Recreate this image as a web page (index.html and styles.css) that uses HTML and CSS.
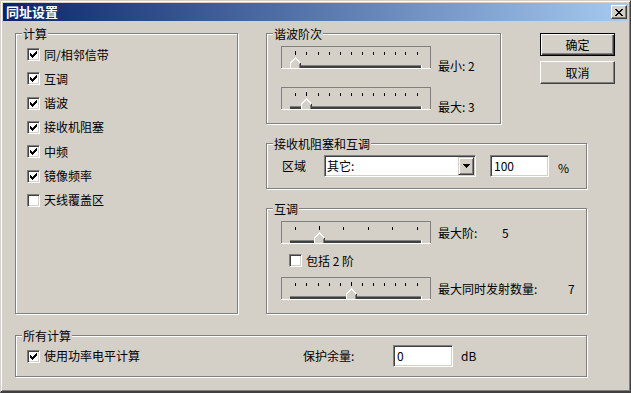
FILE: index.html
```html
<!DOCTYPE html>
<html lang="zh">
<head>
    <meta charset="UTF-8">
    <meta name="viewport" content="width=device-width, initial-scale=1.0">
    <title>同址设置</title>
    <link rel="stylesheet" href="styles.css">
</head>
<body>
    <svg class="defs" width="0" height="0">
        <symbol id="tick" viewBox="0 0 11 11">
            <path d="M2 4h1v3H2zM3 5h1v3H3zM4 6h1v3H4zM5 5h1v3H5zM6 4h1v3H6zM7 3h1v3H7zM8 2h1v3H8z" fill="#000"/>
        </symbol>
        <symbol id="frame" overflow="visible">
            <rect x="0.5" y="0.5" width="149" height="22" fill="none" stroke="#808080"/>
            <rect x="0" y="22" width="150" height="1" fill="#fff"/>
            <rect x="9" y="19" width="131" height="1" fill="#808080"/>
            <rect x="9" y="20" width="131" height="2" fill="#404040"/>
            <rect x="140" y="19" width="1" height="3" fill="#fff"/>
        </symbol>
        <symbol id="thumb" overflow="visible">
            <polygon points="0,22 0,17 5.5,11.5 11,17 11,22" fill="#D4D0C8"/>
            <polyline points="0.5,22 0.5,17 5.5,12 10,16.5" fill="none" stroke="#fff"/>
            <rect x="10" y="17" width="1" height="5" fill="#404040"/>
            <rect x="9" y="18" width="1" height="4" fill="#808080"/>
        </symbol>
    </svg>

    <div class="window">
        <div class="titlebar">
            <span class="title">同址设置</span>
            <span class="close">
                <svg width="8" height="7" viewBox="0 0 8 7" shape-rendering="crispEdges">
                    <path d="M0 0h2v1H0zM1 1h2v1H1zM2 2h4v1H2zM3 3h2v1H3zM2 4h4v1H2zM1 5h2v1H1zM0 6h2v1H0zM6 0h2v1H6zM5 1h2v1H5zM5 5h2v1H5zM6 6h2v1H6z" fill="#000"/>
                </svg>
            </span>
        </div>

        <div class="dialog">
            <div class="top">
                <div class="group calc">
                    <span class="legend">计算</span>
                    <ul class="checks">
                        <li class="check"><span class="box"><svg><use href="#tick"/></svg></span>同/相邻信带</li>
                        <li class="check"><span class="box"><svg><use href="#tick"/></svg></span>互调</li>
                        <li class="check"><span class="box"><svg><use href="#tick"/></svg></span>谐波</li>
                        <li class="check"><span class="box"><svg><use href="#tick"/></svg></span>接收机阻塞</li>
                        <li class="check"><span class="box"><svg><use href="#tick"/></svg></span>中频</li>
                        <li class="check"><span class="box"><svg><use href="#tick"/></svg></span>镜像频率</li>
                        <li class="check"><span class="box"></span>天线覆盖区</li>
                    </ul>
                </div>

                <div class="right">
                    <div class="row1">
                        <div class="group harm">
                            <span class="legend">谐波阶次</span>
                            <div class="srow">
                                <svg class="slider" width="150" height="23" shape-rendering="crispEdges">
                                    <use href="#frame"/>
                                    <g fill="#000">
                                        <rect x="14" y="5" width="1" height="4"/>
                                        <rect x="25" y="6" width="1" height="3"/>
                                        <rect x="37" y="6" width="1" height="3"/>
                                        <rect x="48" y="6" width="1" height="3"/>
                                        <rect x="59" y="6" width="1" height="3"/>
                                        <rect x="70" y="6" width="1" height="3"/>
                                        <rect x="81" y="6" width="1" height="3"/>
                                        <rect x="92" y="6" width="1" height="3"/>
                                        <rect x="103" y="6" width="1" height="3"/>
                                        <rect x="114" y="6" width="1" height="3"/>
                                        <rect x="124" y="6" width="1" height="3"/>
                                        <rect x="136" y="6" width="1" height="3"/>
                                    </g>
                                    <use href="#thumb" x="9"/>
                                </svg>
                                <span class="lbl">最小: 2</span>
                            </div>
                            <div class="srow">
                                <svg class="slider" width="150" height="23" shape-rendering="crispEdges">
                                    <use href="#frame"/>
                                    <g fill="#000">
                                        <rect x="14" y="6" width="1" height="3"/>
                                        <rect x="25" y="5" width="1" height="4"/>
                                        <rect x="37" y="6" width="1" height="3"/>
                                        <rect x="48" y="6" width="1" height="3"/>
                                        <rect x="59" y="6" width="1" height="3"/>
                                        <rect x="70" y="6" width="1" height="3"/>
                                        <rect x="81" y="6" width="1" height="3"/>
                                        <rect x="92" y="6" width="1" height="3"/>
                                        <rect x="103" y="6" width="1" height="3"/>
                                        <rect x="114" y="6" width="1" height="3"/>
                                        <rect x="124" y="6" width="1" height="3"/>
                                        <rect x="136" y="6" width="1" height="3"/>
                                    </g>
                                    <use href="#thumb" x="20"/>
                                </svg>
                                <span class="lbl">最大: 3</span>
                            </div>
                        </div>
                        <div class="buttons">
                            <button class="btn default">确定</button>
                            <button class="btn">取消</button>
                        </div>
                    </div>

                    <div class="group block">
                        <span class="legend">接收机阻塞和互调</span>
                        <div class="frow">
                            <span>区域</span>
                            <div class="field select">
                                <span class="val">其它:</span>
                                <span class="arrow">
                                    <svg width="7" height="4" viewBox="0 0 7 4" shape-rendering="crispEdges"><path d="M0 0h7v1H0zM1 1h5v1H1zM2 2h3v1H2zM3 3h1v1H3z" fill="#000"/></svg>
                                </span>
                            </div>
                            <div class="field input pct-input">100</div>
                            <span class="pct">%</span>
                        </div>
                    </div>

                    <div class="group imd">
                        <span class="legend">互调</span>
                        <div class="srow">
                            <svg class="slider" width="150" height="23" shape-rendering="crispEdges">
                                <use href="#frame"/>
                                <g fill="#000">
                                    <rect x="14" y="6" width="1" height="3"/>
                                    <rect x="38" y="5" width="1" height="4"/>
                                    <rect x="62" y="6" width="1" height="3"/>
                                    <rect x="87" y="6" width="1" height="3"/>
                                    <rect x="111" y="6" width="1" height="3"/>
                                    <rect x="136" y="6" width="1" height="3"/>
                                </g>
                                <use href="#thumb" x="33"/>
                            </svg>
                            <span class="lbl lbl-a">最大阶:</span>
                            <span>5</span>
                        </div>
                        <div class="check pair">
                            <span class="box"></span>包括 2 阶
                        </div>
                        <div class="srow">
                            <svg class="slider" width="150" height="23" shape-rendering="crispEdges">
                                <use href="#frame"/>
                                <g fill="#000">
                                    <rect x="14" y="6" width="1" height="3"/>
                                    <rect x="25" y="6" width="1" height="3"/>
                                    <rect x="37" y="6" width="1" height="3"/>
                                    <rect x="48" y="6" width="1" height="3"/>
                                    <rect x="59" y="6" width="1" height="3"/>
                                    <rect x="70" y="5" width="1" height="4"/>
                                    <rect x="81" y="6" width="1" height="3"/>
                                    <rect x="92" y="6" width="1" height="3"/>
                                    <rect x="103" y="6" width="1" height="3"/>
                                    <rect x="114" y="6" width="1" height="3"/>
                                    <rect x="124" y="6" width="1" height="3"/>
                                    <rect x="136" y="6" width="1" height="3"/>
                                </g>
                                <use href="#thumb" x="65"/>
                            </svg>
                            <span class="lbl lbl-b">最大同时发射数量:</span>
                            <span>7</span>
                        </div>
                    </div>
                </div>
            </div>

            <div class="group all">
                <span class="legend">所有计算</span>
                <div class="frow">
                    <div class="check opt"><span class="box"><svg><use href="#tick"/></svg></span>使用功率电平计算</div>
                    <span class="margin-lbl">保护余量:</span>
                    <div class="field input db-input">0</div>
                    <span class="unit">dB</span>
                </div>
            </div>
        </div>
    </div>
</body>
</html>
```

FILE: styles.css
```css
* {
    margin: 0;
    padding: 0;
    box-sizing: border-box;
}

body {
    background: #D4D0C8;
    color: #000;
    font-family: "Noto Sans CJK SC", "Noto Sans", sans-serif;
    font-size: 12px;
    line-height: 14px;
}

.defs {
    display: block;
    width: 0;
    height: 0;
}

.window {
    width: 631px;
    height: 393px;
    background: #D4D0C8;
    border: 1px solid;
    border-width: 1px 1px 2px 1px;
    border-color: #D4D0C8 #404040 #404040 #D4D0C8;
    box-shadow: inset 1px 1px 0 #fff, inset -1px -1px 0 #808080;
    padding: 2px;
}

.titlebar {
    height: 18px;
    display: flex;
    align-items: center;
    justify-content: space-between;
    padding: 0 1px 0 3px;
    background: linear-gradient(to right, #0A246A, #A6CAF0);
}

.title {
    color: #fff;
    font-weight: bold;
    font-size: 13px;
}

.close {
    width: 16px;
    height: 14px;
    display: flex;
    align-items: center;
    justify-content: center;
    background: #D4D0C8;
    border: 1px solid;
    border-color: #fff #404040 #404040 #fff;
    box-shadow: inset -1px -1px 0 #808080;
}

.close svg {
    display: block;
}

.dialog {
    padding: 12px 0 0 12px;
}

.top {
    display: flex;
    align-items: flex-start;
}

/* etched group frame */
.group {
    position: relative;
    border: 1px solid #808080;
    box-shadow: 1px 1px 0 #fff, inset 1px 1px 0 #fff;
}

.legend {
    position: absolute;
    top: -7px;
    left: 6px;
    padding: 0 1px;
    background: #D4D0C8;
    white-space: nowrap;
}

.calc {
    width: 223px;
    height: 281px;
    padding: 14px 0 0 11px;
}

.checks {
    list-style: none;
    display: flex;
    flex-direction: column;
    gap: 11.33px;
}

.check {
    display: flex;
    align-items: center;
    gap: 4px;
    height: 13px;
    white-space: nowrap;
}

.box {
    width: 13px;
    height: 13px;
    flex: none;
    background: #fff;
    border: 1px solid;
    border-color: #808080 #fff #fff #808080;
    box-shadow: inset 1px 1px 0 #404040, inset -1px -1px 0 #D4D0C8;
}

.box svg {
    display: block;
    width: 11px;
    height: 11px;
}

.right {
    margin-left: 28px;
}

.row1 {
    display: flex;
    align-items: flex-start;
}

.harm {
    width: 235px;
    height: 91px;
    padding: 12px 0 0 14px;
}

.srow {
    display: flex;
    white-space: nowrap;
}

.slider {
    display: block;
    flex: none;
}

.harm .lbl {
    margin: 13px 0 0 7px;
}

.harm .srow + .srow {
    margin-top: 14px;
}

.buttons {
    margin-left: 39px;
    display: flex;
    flex-direction: column;
    gap: 5px;
}

.btn {
    width: 75px;
    height: 23px;
    font: inherit;
    color: #000;
    background: #D4D0C8;
    border: 1px solid;
    border-color: #fff #404040 #404040 #fff;
    box-shadow: inset -1px -1px 0 #808080;
}

.btn.default {
    border-color: #000;
    box-shadow: inset 1px 1px 0 #fff, inset -1px -1px 0 #404040, inset -2px -2px 0 #808080;
}

.block {
    width: 321px;
    height: 46px;
    margin-top: 19px;
    padding: 11px 0 0 15px;
}

.frow {
    display: flex;
    align-items: center;
    white-space: nowrap;
}

.field {
    height: 22px;
    background: #fff;
    border: 1px solid;
    border-color: #808080 #fff #fff #808080;
    box-shadow: inset 1px 1px 0 #404040, inset -1px -1px 0 #D4D0C8;
}

.select {
    width: 152px;
    margin-left: 18px;
    padding: 1px;
    display: flex;
}

.select .val {
    flex: 1;
    padding-left: 1px;
    line-height: 18px;
}

.arrow {
    width: 16px;
    display: flex;
    align-items: center;
    justify-content: center;
    background: #D4D0C8;
    border: 1px solid;
    border-color: #D4D0C8 #404040 #404040 #D4D0C8;
    box-shadow: inset 1px 1px 0 #fff, inset -1px -1px 0 #808080;
}

.arrow svg {
    display: block;
}

.input {
    padding-left: 3px;
    line-height: 20px;
}

.pct-input {
    width: 59px;
    margin-left: 14px;
}

.pct {
    margin: 3px 0 0 9px;
}

.imd {
    width: 321px;
    height: 106px;
    margin-top: 19px;
    padding: 12px 0 0 14px;
}

.imd .srow {
    align-items: center;
}

.imd .lbl {
    margin-left: 7px;
}

.lbl-a {
    width: 64px;
}

.lbl-b {
    width: 130px;
}

.pair {
    margin: 10px 0 10px 8px;
}

.all {
    width: 572px;
    height: 42px;
    margin-top: 21px;
    padding: 9px 0 0 11px;
}

.opt {
    width: 276px;
}

.margin-lbl {
    width: 90px;
}

.db-input {
    width: 60px;
}

.unit {
    margin-left: 8px;
}
```
